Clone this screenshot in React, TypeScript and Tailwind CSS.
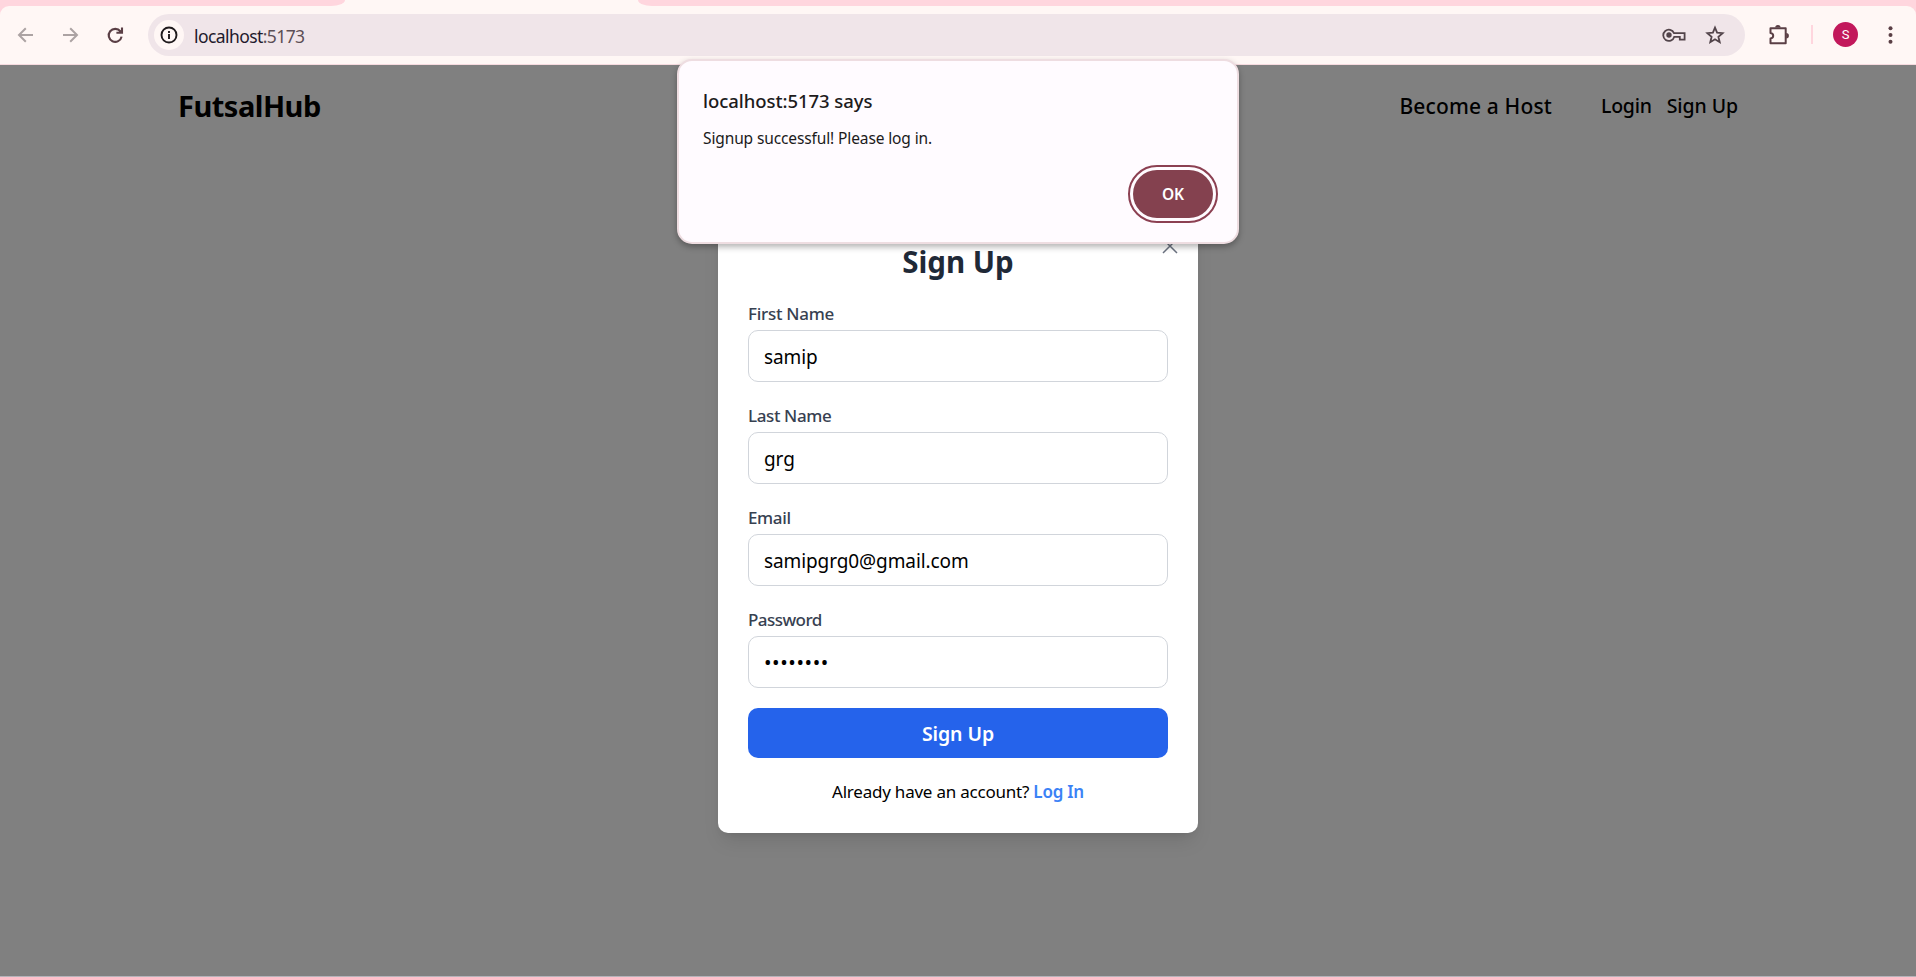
import type { ReactNode } from "react";

function Toolbar() {
  return (
    <div className="flex h-[65px] flex-col bg-[#ffd6de]">
      <div className="flex h-[6px] shrink-0">
        <div className="h-[6px] w-[345px] bg-[#fff7f5]">
          <div className="h-[6px] rounded-br-[14px_6px] bg-[#ffd6de]" />
        </div>
        <div className="h-[6px] w-[293px] bg-[#fff7f5]" />
        <div className="h-[6px] flex-1 bg-[#fff7f5]">
          <div className="h-[6px] rounded-bl-[14px_6px] bg-[#ffd6de]" />
        </div>
      </div>
      <div className="flex flex-1 items-center rounded-t-[9px] border-b border-[#f6dadf] bg-[#fff7f5] pb-px">
        <svg className="ml-[16px] shrink-0" width="20" height="20" viewBox="0 0 20 20" fill="none" stroke="#aca3a3" strokeWidth="2">
          <path d="M17 10H3.2M9.8 3.2 3 10l6.8 6.8" />
        </svg>
        <svg className="ml-[25px] shrink-0" width="20" height="20" viewBox="0 0 20 20" fill="none" stroke="#aca3a3" strokeWidth="2">
          <path d="M2 10h13.8M9.2 3.2 16 10l-6.8 6.8" />
        </svg>
        <svg className="ml-[24px] shrink-0" width="20" height="20" viewBox="0 0 20 20" fill="none" stroke="#5a3f45" strokeWidth="2.1">
          <path d="M15.4 6.4A6.5 6.5 0 1 0 16.6 11.6M17 2.6v5.2h-5.6" />
          <path d="M17.5 3v5h-4Z" fill="#5a3f45" stroke="none" />
        </svg>
        <div className="ml-[23px] flex h-[42px] w-[1597px] shrink-0 items-center rounded-full bg-[#f0e5e9] pl-[6px]">
          <div className="flex size-[30px] items-center justify-center rounded-full bg-[#fff7f5]">
            <svg width="18" height="18" viewBox="0 0 18 18" fill="none" stroke="#1f1a1c" strokeWidth="1.9">
              <circle cx="9" cy="9" r="7.5" />
              <path d="M9 8v5M9 5v2" />
            </svg>
          </div>
          <div className="ml-[10px] pt-[2px] text-[17.5px] leading-[24px] tracking-[-0.58px] text-[#5c4f55]">
            <span className="text-[#1f1a2c]">localhost</span>:5173
          </div>
          <svg className="ml-auto" width="24" height="16" viewBox="0 0 24 16" fill="none" stroke="#52444a" strokeWidth="1.8">
            <path d="M12 6.1h10.6v6.5h-4.8V9.9h-5.6A5.6 5.6 0 1 1 12 6.1Z" />
            <circle cx="7" cy="8" r="2.7" fill="#52444a" stroke="none" />
          </svg>
          <svg className="ml-[19px] mr-[20px]" width="20" height="20" viewBox="0 0 20 20" fill="none" stroke="#52444a" strokeWidth="1.8">
            <path d="m10 2.6 2.1 5.1 5.5.5-4.2 3.6 1.3 5.4-4.7-2.9-4.7 2.9 1.3-5.4-4.2-3.6 5.5-.5Z" />
          </svg>
        </div>
        <svg className="ml-[22px] shrink-0" width="22" height="22" viewBox="0 0 22 22">
          <path d="M3.5 4.2h15.2v15H3.5v-4.8c3.6-.6 3.6-4.8 0-5.4Z" fill="none" stroke="#5a3f45" strokeWidth="2" strokeLinejoin="round" />
          <path d="M8.2 3.6a2.7 2.7 0 0 1 5.4 0ZM19.2 9a2.7 2.7 0 0 1 0 5.4Z" fill="#5a3f45" />
        </svg>
        <div className="ml-[22px] h-[19px] w-[2px] bg-[#ffd6de]" />
        <div className="ml-[20px] flex size-[25px] items-center justify-center rounded-full bg-[#c2185b] font-[Roboto] text-[13px] text-white">S</div>
        <svg className="ml-[28px]" width="10" height="20" viewBox="0 0 10 20" fill="#5a3f45">
          <circle cx="4.5" cy="3.2" r="2" />
          <circle cx="4.5" cy="10" r="2" />
          <circle cx="4.5" cy="16.8" r="2" />
        </svg>
      </div>
    </div>
  );
}

function Field({ label, labelClass, children }: { label: string; labelClass: string; children: ReactNode }) {
  return (
    <div className="mb-5">
      <div className={`h-[30px] text-[17px] font-[550] leading-[28px] text-[#374151] ${labelClass}`}>{label}</div>
      <div className="flex h-[52px] items-center rounded-[10px] border border-[#d1d5db] px-[15px] pt-[2px] text-[19px] leading-[30px] tracking-[-0.1px] text-black">
        {children}
      </div>
    </div>
  );
}

function SignUpCard() {
  return (
    <div className="relative mt-[143px] h-[625px] w-[480px] rounded-[10px] bg-white p-[30px] shadow-[0_12px_19px_-4px_rgba(0,0,0,0.1),0_5px_8px_-5px_rgba(0,0,0,0.1)]">
      <svg className="absolute right-[20px] top-[30px]" width="16" height="16" viewBox="0 0 16 16" stroke="#6b7280" strokeWidth="1.5">
        <path d="m1 1 14 14M15 1 1 15" />
      </svg>
      <h2 className="h-[62px] pt-[4px] text-center text-[29.5px] font-bold leading-[40px] text-[#1f2937]">Sign Up</h2>
      <Field label="First Name" labelClass="tracking-[-0.28px]">samip</Field>
      <Field label="Last Name" labelClass="tracking-[-0.38px]">grg</Field>
      <Field label="Email" labelClass="tracking-[-0.35px]">samipgrg0@gmail.com</Field>
      <Field label="Password" labelClass="tracking-[-0.55px]">
        <span className="text-[20px] tracking-[0.6px]">••••••••</span>
      </Field>
      <button className="block h-[50px] w-full rounded-[10px] bg-[#2563eb] pt-[2px] text-[19.5px] font-semibold leading-[30px] tracking-[-0.1px] text-white">Sign Up</button>
      <p className="mt-[20px] text-center text-[17px] leading-[28px] tracking-[-0.22px] text-black">
        Already have an account? <span className="font-semibold text-[#3b82f6]">Log In</span>
      </p>
    </div>
  );
}

function AlertDialog() {
  return (
    <div className="absolute left-[677px] top-[59px] flex h-[185px] w-[562px] flex-col rounded-[15px] border-2 border-[#eedde1] bg-[#fffbff] shadow-[0_3px_6px_rgba(0,0,0,0.3)]">
      <div className="ml-[24px] mt-[27px] text-[18.5px] font-[550] leading-[26px] tracking-[-0.05px] text-[#201a1b]">localhost:5173 says</div>
      <div className="ml-[24px] mt-[13px] text-[15.5px] leading-[22px] tracking-[-0.12px] text-[#201a1b]">Signup successful! Please log in.</div>
      <div className="ml-auto mr-[19px] mt-[16px] rounded-full border-2 border-[#8c4052] p-[3px]">
        <button className="block h-[48px] w-[80px] rounded-full bg-[#84414f] pt-[2px] text-[15.5px] font-semibold text-white">OK</button>
      </div>
    </div>
  );
}

export default function App() {
  return (
    <div className="relative flex h-[977px] w-[1916px] flex-col overflow-hidden bg-[#808080] font-['Noto_Sans',sans-serif]">
      <Toolbar />
      <div className="flex h-[911px] flex-col">
        <header className="flex h-0 items-start pl-[178px] pr-[178px] text-black">
          <div className="mt-[21px] text-[29px] font-bold leading-[40px] tracking-[-0.5px]">FutsalHub</div>
          <nav className="ml-auto mt-[26px] flex items-center font-[550] leading-[30px]">
            <span className="text-[21px] tracking-[0.15px]">Become a Host</span>
            <span className="ml-[49px] text-[19.5px] tracking-[-0.25px]">Login</span>
            <span className="ml-[15px] text-[19.5px] tracking-[-0.08px]">Sign Up</span>
          </nav>
        </header>
        <main className="flex justify-center">
          <SignUpCard />
        </main>
      </div>
      <div className="h-px bg-[#b5b3ba]" />
      <AlertDialog />
    </div>
  );
}
